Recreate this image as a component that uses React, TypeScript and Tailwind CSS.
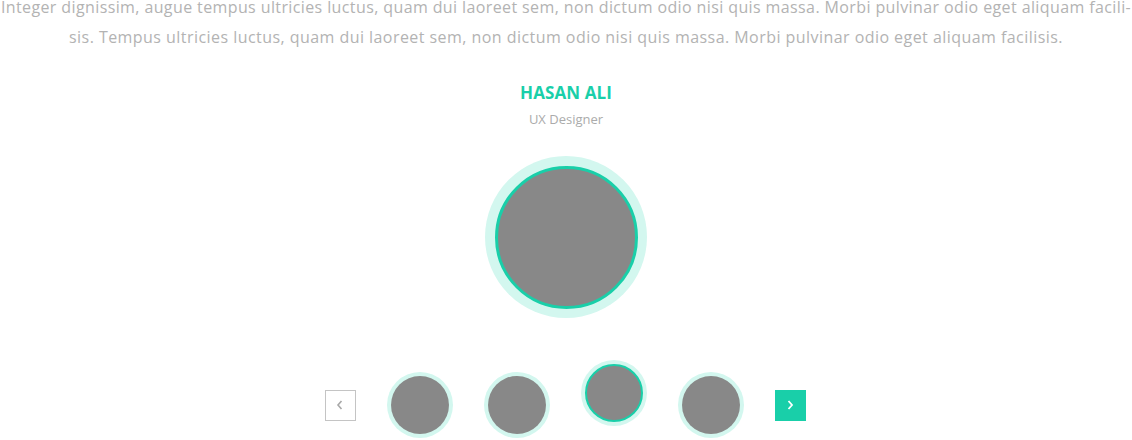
import React from "react";

const GREEN = "#19cfa9";

function Thumb({ active }: { active?: boolean }) {
  return (
    <div
      className={
        "w-[66px] h-[66px] rounded-full bg-[#d3f7ef] p-[4px] shrink-0 " +
        (active ? "-translate-y-[12px]" : "")
      }
    >
      <div
        className={
          "w-full h-full rounded-full bg-[#888888] " +
          (active ? "border-2 border-[#19cfa9]" : "")
        }
      />
    </div>
  );
}

export default function App() {
  return (
    <div
      className="w-[1132px] h-[440px] overflow-hidden bg-white flex flex-col items-center"
      style={{ fontFamily: '"Open Sans", "Liberation Sans", sans-serif' }}
    >
      <div className="-mt-[8px] text-[#b3b3b3] text-[16px] leading-[30px] text-center whitespace-nowrap flex flex-col items-center">
        <p className="tracking-[0.39px]">
          Integer dignissim, augue tempus ultricies luctus, quam dui laoreet sem, non dictum odio nisi quis massa. Morbi pulvinar odio eget aliquam facili-
        </p>
        <p className="tracking-[0.45px]">
          sis. Tempus ultricies luctus, quam dui laoreet sem, non dictum odio nisi quis massa. Morbi pulvinar odio eget aliquam facilisis.
        </p>
      </div>
      <h3 className="mt-[29px] text-[17px] leading-[24px] font-bold tracking-[0.1px]" style={{ color: GREEN }}>
        HASAN ALI
      </h3>
      <p className="mt-[4px] text-[13px] leading-[20px] text-[#ababab]">UX Designer</p>
      <div className="mt-[27px] w-[162px] h-[162px] rounded-full bg-[#d3f7ef] flex items-center justify-center">
        <div className="w-[143px] h-[143px] rounded-full bg-[#888888] border-[3px] border-[#19cfa9]" />
      </div>
      <div className="mt-[54px] -ml-[2px] flex items-center gap-[31px]">
        <button className="w-[31px] h-[31px] border border-[#c4c4c4] bg-white flex items-center justify-center">
          <svg width="10" height="12" viewBox="0 0 10 12" fill="none">
            <path d="M6.5 2 L3 6 L6.5 10" stroke="#a8a8a8" strokeWidth="1.6" />
          </svg>
        </button>
        <Thumb />
        <Thumb />
        <Thumb active />
        <Thumb />
        <button className="w-[31px] h-[31px] flex items-center justify-center" style={{ backgroundColor: GREEN }}>
          <svg width="10" height="12" viewBox="0 0 10 12" fill="none">
            <path d="M3.5 2 L7 6 L3.5 10" stroke="#ffffff" strokeWidth="1.8" />
          </svg>
        </button>
      </div>
    </div>
  );
}
